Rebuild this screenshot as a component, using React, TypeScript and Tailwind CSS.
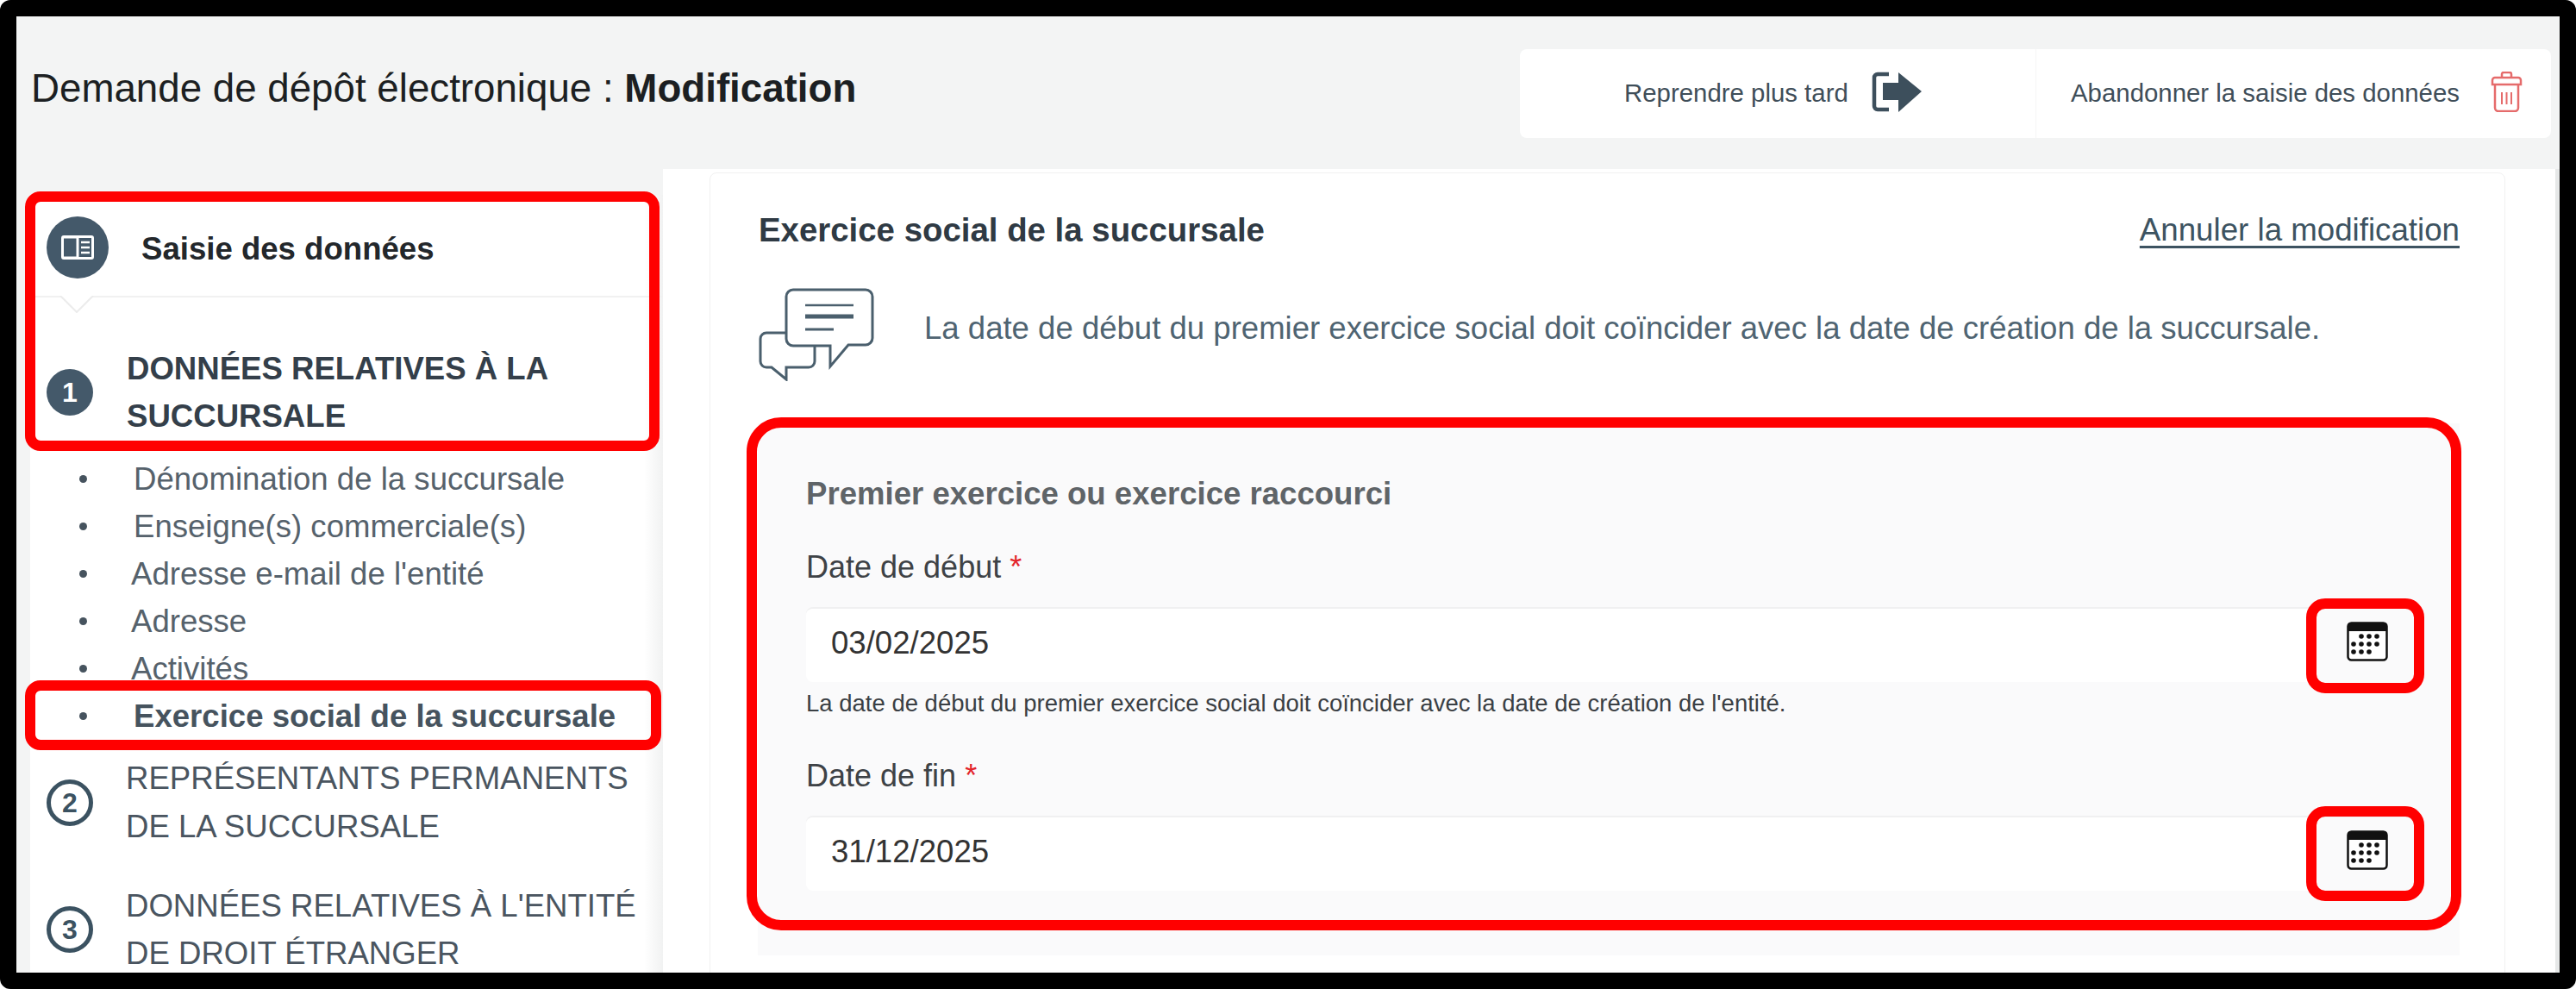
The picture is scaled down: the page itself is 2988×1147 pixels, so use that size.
import React from 'react';

const LIST_ITEMS = [
  { label: 'Dénomination de la succursale', cls: 'ml-[54px] text-[#56626c]' },
  { label: 'Enseigne(s) commerciale(s)', cls: 'ml-[54px] text-[#56626c]' },
  { label: "Adresse e-mail de l'entité", cls: 'ml-[51px] text-[#56626c]' },
  { label: 'Adresse', cls: 'ml-[51px] text-[#56626c]' },
  { label: 'Activités', cls: 'ml-[51px] text-[#56626c]' },
  { label: 'Exercice social de la succursale', cls: 'ml-[54px] font-bold text-[#46535e]' },
];

const CalendarIcon = () => (
  <svg width="48" height="46" viewBox="0 0 48 46">
    <rect x="1.500" y="1.500" width="45" height="43" rx="4" fill="#fff" stroke="#111" strokeWidth="2.500" />
    <path d="M1 5a4 4 0 0 1 4-4h38a4 4 0 0 1 4 4v6H1z" fill="#111" />
    {[17, 26, 35].map((x) => <circle key={x} cx={x} cy={17} r={2.8} fill="#111" />)}
    {[8, 17, 26, 35].map((x) => <circle key={x} cx={x} cy={26} r={2.8} fill="#111" />)}
    {[8, 17, 26].map((x) => <circle key={x} cx={x} cy={35} r={2.8} fill="#111" />)}
  </svg>
);

const ChatIcon = () => (
  <svg width="134" height="108" viewBox="0 0 134 108" fill="none" stroke="#4a5f6d" strokeWidth="3" className="shrink-0">
    <path d="M40 2h84a8 8 0 0 1 8 8v48a8 8 0 0 1-8 8h-20L83 91V67H40a8 8 0 0 1-8-8V10a8 8 0 0 1 8-8z" />
    <path d="M31 52H9a7 7 0 0 0-7 7v26a7 7 0 0 0 7 7h6l17 14V92h26a7 7 0 0 0 7-7V68" />
    <path d="M54 20h56" strokeWidth="2.500" />
    <path d="M54 33h56" strokeWidth="5" />
    <path d="M54 48h33" strokeWidth="3" />
  </svg>
);

const StepNumber = ({ n, filled }: { n: number; filled?: boolean }) => (
  <span
    className={
      filled
        ? 'w-[54px] h-[54px] shrink-0 rounded-full bg-[#44596a] text-white font-bold text-[32px] flex items-center justify-center'
        : 'w-[54px] h-[54px] shrink-0 rounded-full border-[5px] border-[#3b5261] text-[#3b5261] font-bold text-[32px] flex items-center justify-center'
    }
  >
    {n}
  </span>
);

const DateField = ({ value }: { value: string }) => (
  <div className="w-[1865px] h-[87px] flex rounded-lg border-t-2 border-[#f0f0f1]">
    <div className="flex-1 bg-white rounded-l-lg flex items-center pl-[29px] pb-[4px] text-[36.6px] text-[#333]">{value}</div>
    <div className="w-[113px] flex items-center justify-center pl-[5px] pb-[10px]">
      <CalendarIcon />
    </div>
  </div>
);

export default function App() {
  return (
    <div className="w-[2988px] h-[1147px] bg-white font-['Liberation_Sans',Arial,sans-serif]">
      <div className="relative w-[2988px] h-[1147px] border-[19px] rounded-xl border-black bg-white overflow-hidden">
        {/* header */}
        <header className="h-[177px] bg-[#f3f4f4] flex items-start">
          <h1 className="mt-[60px] ml-[17px] text-[45.7px] leading-[48px] text-[#1c1f22] whitespace-nowrap">
            Demande de dépôt électronique : <span className="font-bold">Modification</span>
          </h1>
          <div className="ml-auto mr-[10px] mt-[38px] w-[1196px] h-[103px] bg-white rounded-lg flex items-center text-[#3f4e59] text-[29.4px]">
            <div className="w-[599px] h-full flex items-center pl-[121px] border-r border-[#f6f6f6]">
              <span>Reprendre plus tard</span>
              <svg width="58" height="47" viewBox="0 0 58 47" className="ml-[27px] -mt-1">
                <path d="M20 3H7a4 4 0 0 0-4 4v33a4 4 0 0 0 4 4h13" fill="none" stroke="#3d4f5c" strokeWidth="4.500" />
                <path d="M13 13h18V1l27 22-27 24V33H13z" fill="#3d4f5c" />
              </svg>
            </div>
            <div className="flex-1 h-full flex items-center pl-[40px]">
              <span>Abandonner la saisie des données</span>
              <svg width="37" height="47" viewBox="0 0 37 47" fill="none" stroke="#e56b6b" strokeWidth="2.500" className="ml-[36px] -mt-1">
                <path d="M13 7V3a2 2 0 0 1 2-2h7a2 2 0 0 1 2 2v4" />
                <path d="M2 15V10a3 3 0 0 1 3-3h27a3 3 0 0 1 3 3v5z" />
                <path d="M5 15v27a4 4 0 0 0 4 4h19a4 4 0 0 0 4-4V15" />
                <path d="M13 24v14M18.500 24v14M24 24v14" strokeWidth="2" />
              </svg>
            </div>
          </div>
        </header>

        <div className="flex h-[933px]">
          {/* sidebar */}
          <div className="w-[16px] bg-[#f3f4f4]" />
          <aside className="w-[734px] bg-[linear-gradient(to_right,#fff_97%,#f1f2f2)] overflow-hidden">
            <div className="h-[30px] bg-[#f3f4f4]" />
            <div className="relative h-[119px] flex items-center pl-[19px] border-b-2 border-[#f1f1f1]">
              <span className="w-[72px] h-[72px] rounded-full bg-[#44596a] flex items-center justify-center mt-[5px]">
                <svg width="38" height="28" viewBox="0 0 38 28" fill="none" stroke="#fff" strokeWidth="3">
                  <rect x="1.500" y="1.500" width="35" height="25" rx="1.500" />
                  <path d="M19 2v24" />
                  <path d="M3 2.500h16M3 25.500h16" strokeWidth="2" />
                  <path d="M23 8h10M23 14h10M23 20h10" strokeWidth="2.500" />
                </svg>
              </span>
              <span className="ml-[38px] mt-[9px] font-bold text-[36.6px] text-[#23272b]">Saisie des données</span>
              <svg width="40" height="20" viewBox="0 0 40 20" fill="#fff" stroke="#ececec" strokeWidth="2" className="absolute left-[34px] -bottom-[20px]">
                <path d="M1 0l19 19L39 0" />
              </svg>
            </div>
            <div className="mt-[55px] flex items-center pl-[19px]">
              <StepNumber n={1} filled />
              <div className="ml-[39px] text-[36.6px] leading-[55px] font-bold text-[#343f4a]">
                DONNÉES RELATIVES À LA<br />SUCCURSALE
              </div>
            </div>
            <ul className="mt-[18px]">
              {LIST_ITEMS.map((item) => (
                <li key={item.label} className="h-[55px] flex items-center pl-[57px] text-[36.6px] leading-[55px]">
                  <span className="w-[9px] h-[9px] rounded-full bg-[#46535e] shrink-0" />
                  <span className={item.cls}>{item.label}</span>
                </li>
              ))}
            </ul>
            <div className="mt-[17px] flex items-center pl-[19px]">
              <StepNumber n={2} />
              <div className="ml-[38px] text-[36.6px] leading-[56px] text-[#4a5560]">
                REPRÉSENTANTS PERMANENTS<br />DE LA SUCCURSALE
              </div>
            </div>
            <div className="mt-[36px] flex items-center pl-[19px]">
              <StepNumber n={3} />
              <div className="ml-[38px] text-[36.6px] leading-[55px] text-[#4a5560] whitespace-nowrap">
                DONNÉES RELATIVES À L'ENTITÉ<br />DE DROIT ÉTRANGER
              </div>
            </div>
          </aside>

          {/* main */}
          <main className="flex-1 bg-white pt-[4px] pl-[54px] pr-[58px] overflow-hidden">
            <div className="h-[1000px] rounded-lg border border-[#f1f1f1] pl-[56px] pr-[52px] pt-[46px]">
              <div className="h-[40px] flex items-center justify-between">
                <h2 className="font-bold text-[38.4px] text-[#2f3a44]">Exercice social de la succursale</h2>
                <a className="text-[36.7px] text-[#3d5361] underline decoration-[3px] underline-offset-[6px]">Annuler la modification</a>
              </div>
              <div className="mt-[47px] flex items-center">
                <ChatIcon />
                <p className="ml-[58px] -mt-[14px] text-[36.56px] text-[#4f6472] whitespace-nowrap">
                  La date de début du premier exercice social doit coïncider avec la date de création de la succursale.
                </p>
              </div>
              <section className="-ml-px mt-[49px] w-[1974px] h-[617px] bg-[#fafafb] pl-[56px] pt-[62px]">
                <h3 className="font-bold text-[36.6px] leading-[40px] text-[#5f6468]">Premier exercice ou exercice raccourci</h3>
                <label className="block mt-[45px] text-[36px] leading-[40px] text-[#3e4246]">
                  Date de début <span className="text-[#e3242b]">*</span>
                </label>
                <div className="mt-[26px]"><DateField value="03/02/2025" /></div>
                <p className="mt-[10px] text-[27.5px] leading-[30px] text-[#3a3f44] whitespace-nowrap">
                  La date de début du premier exercice social doit coïncider avec la date de création de l'entité.
                </p>
                <label className="block mt-[49px] text-[36px] leading-[40px] text-[#3e4246]">
                  Date de fin <span className="text-[#e3242b]">*</span>
                </label>
                <div className="mt-[26px]"><DateField value="31/12/2025" /></div>
              </section>
            </div>
          </main>
          <div className="w-[5px] bg-[#e6e8e8]" />
        </div>

        {/* red annotation frames, drawn over the screenshot */}
        <div className="absolute left-[10px] top-[203px] w-[736px] h-[301px] border-[12px] border-[#ff0000] rounded-[18px] pointer-events-none" />
        <div className="absolute left-[10px] top-[770px] w-[738px] h-[81px] border-[12px] border-[#ff0000] rounded-[18px] pointer-events-none" />
        <div className="absolute left-[847px] top-[465px] w-[1989px] h-[595px] border-[12px] border-[#ff0000] rounded-[40px] pointer-events-none" />
        <div className="absolute left-[2656px] top-[675px] w-[137px] h-[110px] border-[12px] border-[#ff0000] rounded-[22px] pointer-events-none" />
        <div className="absolute left-[2656px] top-[916px] w-[137px] h-[110px] border-[12px] border-[#ff0000] rounded-[22px] pointer-events-none" />
      </div>
    </div>
  );
}
